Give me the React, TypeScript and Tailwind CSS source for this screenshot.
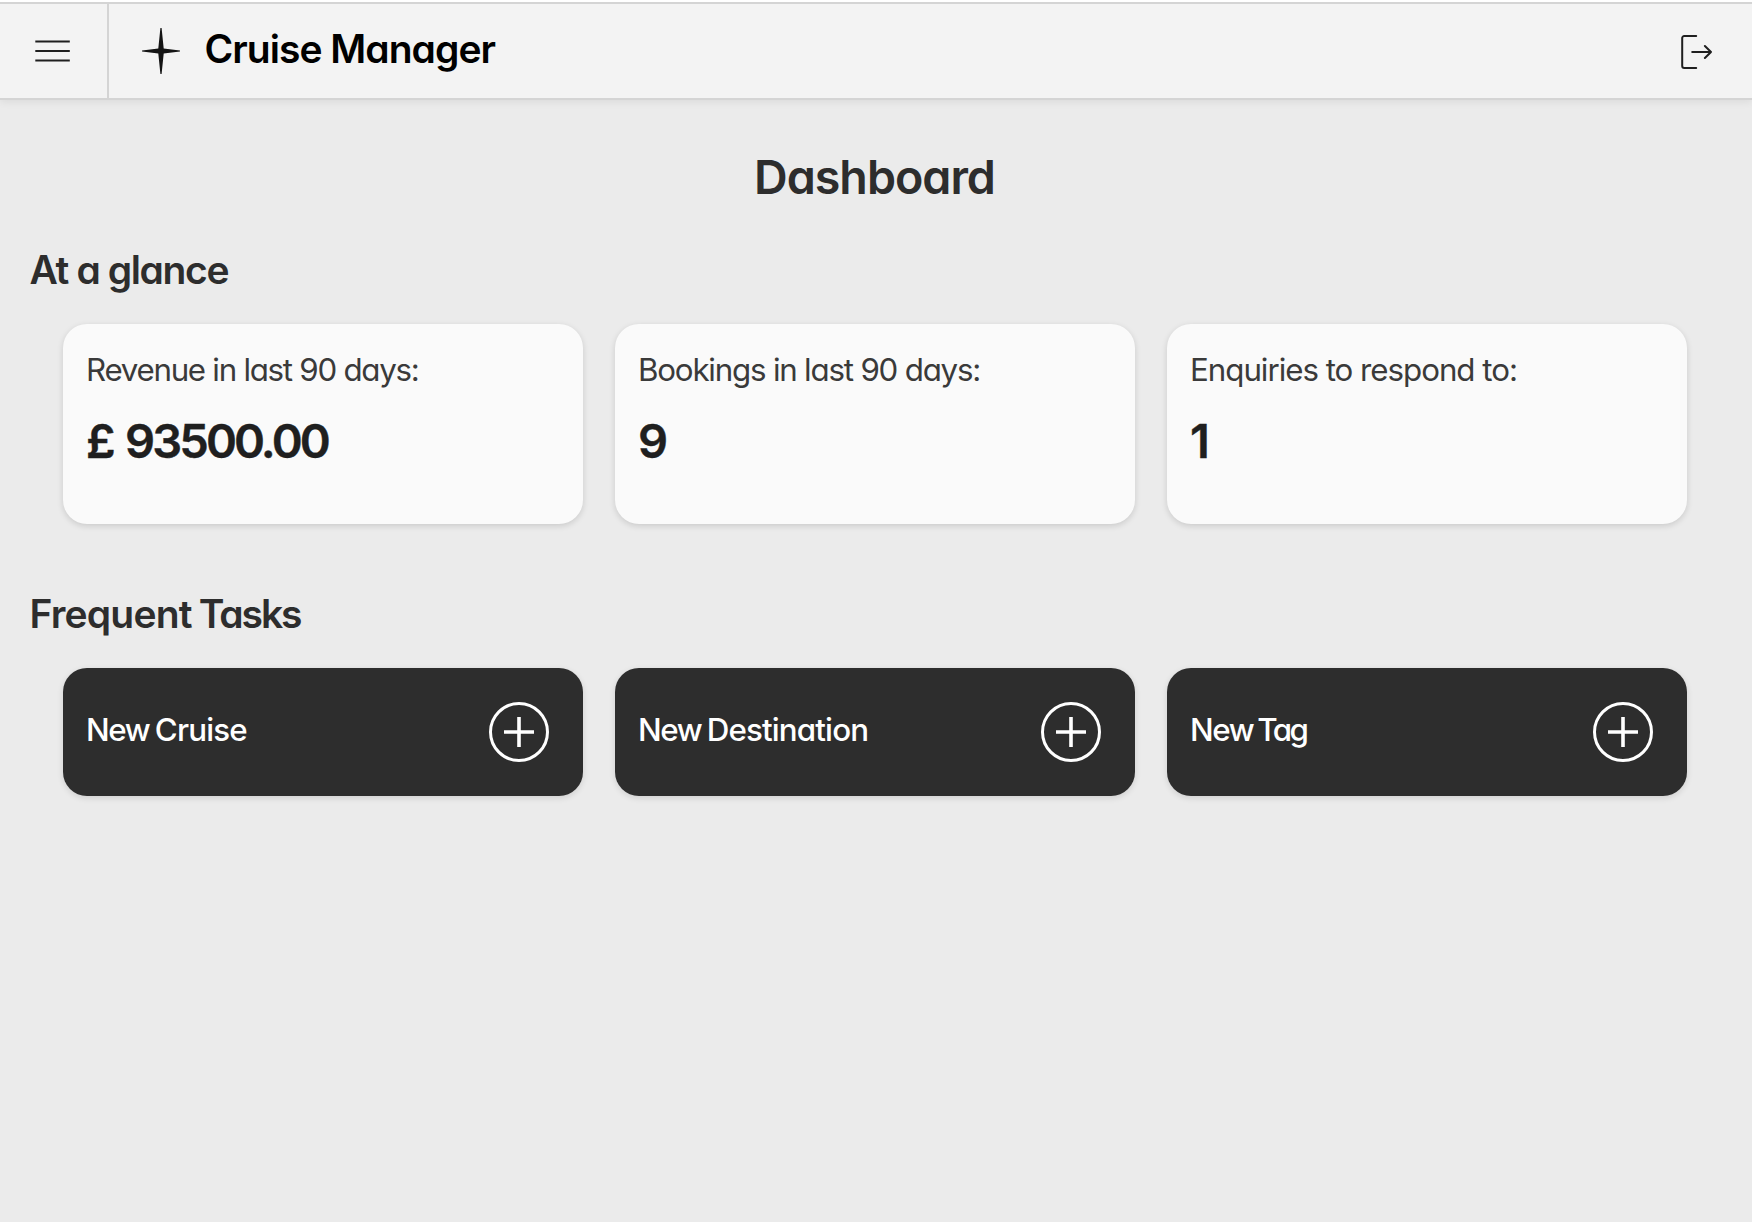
import React from "react";

const stats = [
  { label: "Revenue in last 90 days:", value: "£ 93500.00", labelTracking: "tracking-[-1.28px]" },
  { label: "Bookings in last 90 days:", value: "9", labelTracking: "tracking-[-1.21px]" },
  { label: "Enquiries to respond to:", value: "1", labelTracking: "tracking-[-1.03px]" },
];

const tasks = [
  { kind: "Cruise", tracking: "tracking-[-0.8px]", gap: "[word-spacing:-1.5px]" },
  { kind: "Destination", tracking: "tracking-[-0.85px]", gap: "[word-spacing:-1.5px]" },
  { kind: "Tag", tracking: "tracking-[-2.5px]", gap: "[word-spacing:-3px]" },
];

function MenuIcon() {
  return (
    <svg width="36" height="24" viewBox="0 0 36 24" fill="none" stroke="#1f1f1f" strokeWidth="2">
      <path d="M0.3 2.5H34.8M0.3 12H34.8M0.3 21.5H34.8" />
    </svg>
  );
}

function StarLogo() {
  return (
    <svg width="38" height="46" viewBox="0 0 38 46" fill="#141414">
      <path d="M18.4 0H19.6L21.7 20.4L38 22.6V23.4L21.7 25.6L19.6 46H18.4L16.3 25.6L0 23.4V22.6L16.3 20.4Z" />
    </svg>
  );
}

function LogoutIcon() {
  return (
    <svg width="32" height="36" viewBox="0 0 32 36" fill="none" stroke="#1f1f1f" strokeWidth="2" strokeLinecap="round" strokeLinejoin="round">
      <path d="M16.2 2H4.2a2 2 0 0 0-2 2V32a2 2 0 0 0 2 2H16.2" />
      <path d="M12.2 18H31M24.9 12L31 18L24.9 24" />
    </svg>
  );
}

function PlusCircleIcon() {
  return (
    <svg width="60" height="60" viewBox="0 0 60 60" fill="none" stroke="#fff" strokeWidth="3">
      <circle cx="30" cy="30" r="28.5" />
      <path strokeWidth="3.6" d="M15 30H45M30 15V45" />
    </svg>
  );
}

export default function App() {
  return (
    <div className="flex h-[1222px] w-full flex-col bg-[#ebebeb] font-['Inter',sans-serif] [font-feature-settings:'cv11'] text-[#2d2d2d]">
      <header className="flex h-[100px] shrink-0 flex-col bg-white shadow-[0_2px_8px_rgba(0,0,0,0.07)]">
        <div className="mt-[2px] flex h-[98px] items-stretch border-y-2 border-[#d4d4d4] bg-[#f3f3f3]">
          <button className="flex w-[109px] items-center border-r-2 border-[#d4d4d4] pl-[35px]">
            <MenuIcon />
          </button>
          <div className="flex flex-1 items-center pl-[33px]">
            <StarLogo />
            <span className="-mt-[5px] ml-[24.5px] text-[39px] leading-none font-semibold tracking-[-0.97px] text-black">
              Cruise Manager
            </span>
          </div>
          <button className="flex items-center pt-[2px] pr-[40px]">
            <LogoutIcon />
          </button>
        </div>
      </header>
      <main className="flex flex-1 flex-col">
        <h1 className="mt-[52px] mr-[3px] h-[50px] text-center text-[46.6px] leading-[50px] font-semibold tracking-[-1px]">
          Dashboard
        </h1>
        <section className="mt-[44px]">
          <h2 className="ml-[29.5px] h-[48px] text-[39px] leading-[48px] font-semibold tracking-[-1.38px]">
            At a glance
          </h2>
          <div className="mt-[30px] grid grid-cols-3 gap-8 pr-[65px] pl-[63px]">
            {stats.map((s) => (
              <div key={s.label} className="h-[200px] rounded-3xl bg-[#fafafa] pl-[23px] shadow-[0_2px_6px_rgba(0,0,0,0.14)]">
                <p className={`mt-[26px] h-[40px] text-[31.3px] leading-[40px] whitespace-nowrap text-[#3a3a3a] ${s.labelTracking}`}>
                  {s.label}
                </p>
                <p className="mt-[21px] h-[60px] text-[47px] leading-[60px] font-semibold tracking-[-2.9px] [word-spacing:3.5px] whitespace-nowrap text-[#1f1f1f] [-webkit-text-stroke:0.4px_#1f1f1f]">
                  {s.value}
                </p>
              </div>
            ))}
          </div>
        </section>
        <section className="mt-[66px]">
          <h2 className="ml-[29.5px] h-[48px] text-[39px] leading-[48px] font-semibold tracking-[-0.8px] [word-spacing:-2px]">
            Frequent <span className="tracking-[-2.1px]">Tasks</span>
          </h2>
          <div className="mt-[30px] grid grid-cols-3 gap-8 pr-[65px] pl-[63px]">
            {tasks.map((t) => (
              <button
                key={t.kind}
                className="flex h-[128px] items-center justify-between rounded-3xl bg-[#2d2d2d] pr-[34px] pl-[23px] text-left text-white shadow-[0_2px_6px_rgba(0,0,0,0.12)]"
              >
                <span className={`-mt-[3px] text-[31.3px] leading-none font-medium tracking-[-1.4px] whitespace-nowrap ${t.gap}`}>
                  New <span className={t.tracking}>{t.kind}</span>
                </span>
                <PlusCircleIcon />
              </button>
            ))}
          </div>
        </section>
      </main>
    </div>
  );
}
